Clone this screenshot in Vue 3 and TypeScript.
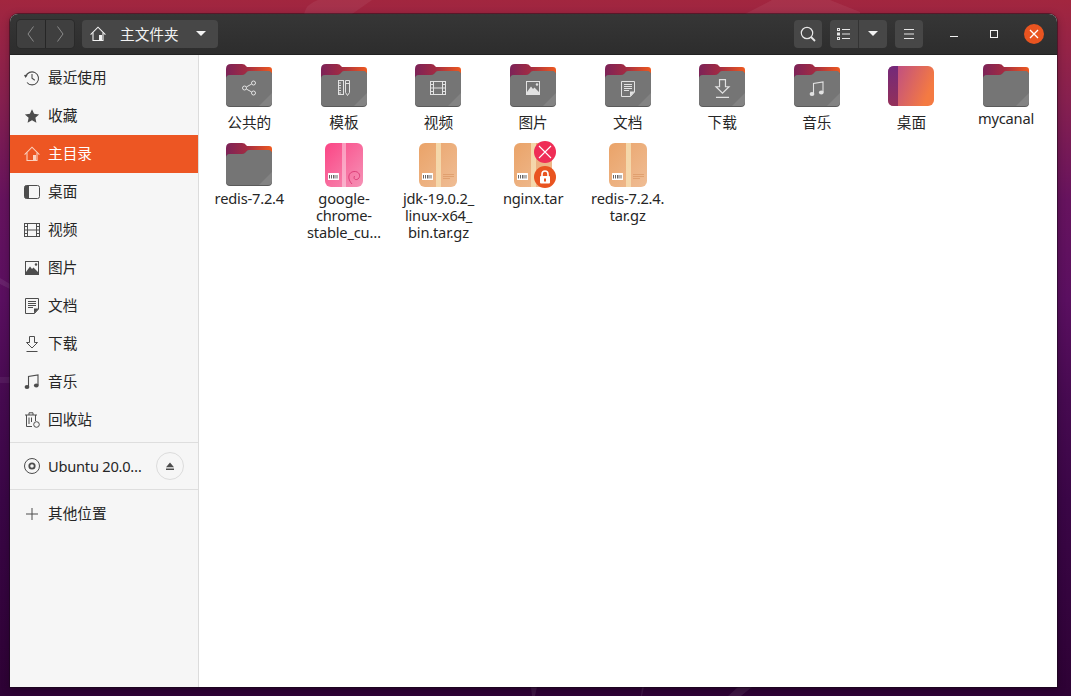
<script setup lang="ts">
interface SideItem { label: string; icon: string; active?: boolean }
interface FileItem { lines: string[]; kind: 'folder' | 'desktop' | 'deb' | 'tar' | 'locked'; glyph?: string; cjk?: boolean; tight?: boolean }

const sideItems: SideItem[] = [
  { label: '最近使用', icon: 'i-history' },
  { label: '收藏', icon: 'i-star' },
  { label: '主目录', icon: 'i-home', active: true },
  { label: '桌面', icon: 'i-desktop' },
  { label: '视频', icon: 'i-film' },
  { label: '图片', icon: 'i-image' },
  { label: '文档', icon: 'i-doc' },
  { label: '下载', icon: 'i-download' },
  { label: '音乐', icon: 'i-music' },
  { label: '回收站', icon: 'i-trash' },
]

const files: FileItem[] = [
  { lines: ['公共的'], kind: 'folder', glyph: 'i-share', cjk: true },
  { lines: ['模板'], kind: 'folder', glyph: 'i-template', cjk: true },
  { lines: ['视频'], kind: 'folder', glyph: 'i-film', cjk: true },
  { lines: ['图片'], kind: 'folder', glyph: 'i-image', cjk: true },
  { lines: ['文档'], kind: 'folder', glyph: 'i-doc', cjk: true },
  { lines: ['下载'], kind: 'folder', glyph: 'i-download', cjk: true },
  { lines: ['音乐'], kind: 'folder', glyph: 'i-music', cjk: true },
  { lines: ['桌面'], kind: 'desktop', cjk: true },
  { lines: ['mycanal'], kind: 'folder', tight: true },
  { lines: ['redis-7.2.4'], kind: 'folder' },
  { lines: ['google-', 'chrome-', 'stable_cu…'], kind: 'deb' },
  { lines: ['jdk-19.0.2_', 'linux-x64_', 'bin.tar.gz'], kind: 'tar' },
  { lines: ['nginx.tar'], kind: 'locked' },
  { lines: ['redis-7.2.4.', 'tar.gz'], kind: 'tar' },
]
</script>

<template>
  <div class="desktop">
    <svg class="wallpaper" width="1071" height="696" viewBox="0 0 1071 696" aria-hidden="true">
      <path d="M304 14Q306 4 318 0H372L352 14Z" fill="#fff" opacity="0.06" />
      <path d="M745 14L772 0H830L860 12V14Z" fill="#fff" opacity="0.06" />
      <path d="M0 278L10 284V289L0 284Z" fill="#fff" opacity="0.08" />
      <path d="M0 377H10V383H0Z" fill="#fff" opacity="0.06" />
      <path d="M531 687H537L535 696H532Z" fill="#fff" opacity="0.08" />
      <path d="M642 687H644L642 696H641Z" fill="#fff" opacity="0.08" />
      <path d="M738 687H752L741 696H728Z" fill="#fff" opacity="0.08" />
    </svg>
    <svg class="defs" aria-hidden="true">
      <defs>
        <linearGradient id="g-back" x1="0" y1="0" x2="1" y2="0">
          <stop offset="0" stop-color="#7c2358" />
          <stop offset="0.45" stop-color="#a32b42" />
          <stop offset="1" stop-color="#ee5a20" />
        </linearGradient>
        <linearGradient id="g-desk" x1="0" y1="0" x2="1" y2="0.35">
          <stop offset="0" stop-color="#b5468f" />
          <stop offset="1" stop-color="#f47a42" />
        </linearGradient>
        <linearGradient id="g-strip" x1="0" y1="0" x2="0" y2="1">
          <stop offset="0" stop-color="#74297a" />
          <stop offset="1" stop-color="#93305a" />
        </linearGradient>
        <linearGradient id="g-pink" x1="0" y1="0" x2="1" y2="1">
          <stop offset="0" stop-color="#fb4585" />
          <stop offset="1" stop-color="#f592b6" />
        </linearGradient>
        <linearGradient id="g-tan" x1="0" y1="0" x2="1" y2="1">
          <stop offset="0" stop-color="#eaa368" />
          <stop offset="1" stop-color="#efbd95" />
        </linearGradient>
      </defs>
      <symbol id="folder" viewBox="0 0 46 44">
        <path d="M0 5Q0 0 5 0H16Q19 0 20 2L21 3H43Q46 3 46 6V24H0Z" fill="url(#g-back)" />
        <path d="M0 15Q0 11 4 11H16Q18 11 19 10L20 9Q21 7.500 23 7.500H42Q46 7.500 46 11.500V39Q46 43 42 43H4Q0 43 0 39Z" fill="#5a5a5a" />
        <path d="M0 15Q0 11 4 11H16Q18 11 19 10L20 9Q21 7 23 7H42Q46 7 46 11V38Q46 42 42 42H4Q0 42 0 38Z" fill="#757575" />
        <path d="M46 29L33 42H42Q46 42 46 38Z" fill="#fff" opacity="0.1" />
      </symbol>
      <symbol id="desk" viewBox="0 0 46 44">
        <rect x="0" y="2" width="46" height="40" rx="6" fill="url(#g-desk)" />
        <path d="M6 2H10V42H6Q0 42 0 36V8Q0 2 6 2Z" fill="url(#g-strip)" />
      </symbol>
      <symbol id="box-pink" viewBox="0 0 38 44">
        <rect width="38" height="44" rx="6" fill="url(#g-pink)" />
        <rect x="17" width="4" height="44" fill="#fff" opacity="0.4" />
        <rect x="3" y="30" width="11" height="7" rx="0.500" fill="#fff" />
        <path d="M4.500 32v3.500M6.500 32v3.500M8.500 32v3.500M10 32v3.500M12 32v3.500" stroke="#666" stroke-width="1" />
        <path d="M27 41C22 36 23 29 29 28.500C34 28 36.500 33 33 36C30.500 37.500 28 36 29.500 33" fill="none" stroke="#d93a75" stroke-width="0.900" />
      </symbol>
      <symbol id="box-tan" viewBox="0 0 38 44">
        <rect width="38" height="44" rx="6" fill="url(#g-tan)" />
        <rect x="17" width="5" height="44" fill="#f5dcaf" opacity="0.9" />
        <rect x="3" y="30" width="11" height="7" rx="0.500" fill="#fff" />
        <path d="M4.500 32v3.500M6.500 32v3.500M8.500 32v3.500M10 32v3.500M12 32v3.500" stroke="#666" stroke-width="1" />
        <path d="M24 31.500h11M24 33.500h11M24 35.500h7" stroke="#dc9a68" stroke-width="0.800" />
      </symbol>

      <symbol id="i-history" viewBox="0 0 16 16">
        <g fill="none" stroke="currentColor" stroke-width="1.100">
          <path d="M1.800 6.500A6.500 6.500 0 1 1 3 12.500" />
          <path d="M8 4v4.200l2.800 2" />
        </g>
        <path d="M0 5L3.800 4.600L1.500 8Z" fill="currentColor" />
      </symbol>
      <symbol id="i-star" viewBox="0 0 16 16">
        <path d="M8 1.200l2.100 4.600 5 .6-3.700 3.400 1 5L8 12.300 3.600 14.800l1-5L.9 6.400l5-.6z" fill="currentColor" />
      </symbol>
      <symbol id="i-home" viewBox="0 0 16 16">
        <g fill="none" stroke="currentColor" stroke-width="1.100">
          <path d="M.6 8.600L8 1.200l7.400 7.400" />
          <path d="M3 6.500V14.500H13V6.500" />
        </g>
        <rect x="9" y="9" width="3" height="5.500" fill="currentColor" />
      </symbol>
      <symbol id="i-desktop" viewBox="0 0 16 16">
        <rect x="0.500" y="1.500" width="15" height="13" rx="2" fill="none" stroke="currentColor" />
        <path d="M2.500 1.500H5V14.500H2.500Q.5 14.500 .5 12.500V3.500Q.5 1.500 2.500 1.500Z" fill="currentColor" />
      </symbol>
      <symbol id="i-film" viewBox="0 0 16 16">
        <g fill="none" stroke="currentColor">
          <rect x="0.500" y="1.500" width="15" height="13" />
          <path d="M3.500 1.500v13M12.500 1.500v13M3.500 8h9M.5 4.500h3M.5 8h3M.5 11.500h3M12.500 4.500h3M12.500 8h3M12.500 11.500h3" />
        </g>
      </symbol>
      <symbol id="i-image" viewBox="0 0 16 16">
        <path fill-rule="evenodd" d="M1 1H15V15H1ZM2 2V12H14V2Z" fill="currentColor" />
        <path d="M2 12L6 6.500L8 9L9.500 7.500L14 12ZM12 3.200a1.300 1.300 0 1 1 0 2.600a1.300 1.300 0 1 1 0-2.600Z" fill="currentColor" />
      </symbol>
      <symbol id="i-doc" viewBox="0 0 16 16">
        <g fill="none" stroke="currentColor">
          <path d="M1.500 .5H14.500V11L10.500 15.500H1.500Z" />
          <path d="M4 3.500H12M4 5.500H12M4 7.500H12M4 9.500H9" />
        </g>
        <path d="M10 15.500V10.500H15Z" fill="currentColor" />
      </symbol>
      <symbol id="i-download" viewBox="0 0 16 16">
        <g fill="none" stroke="currentColor">
          <path d="M5.500 .5H10.500V6.500H13.500L8 12L2.500 6.500H5.500Z" />
          <path d="M2.500 15.500H13.500" />
        </g>
      </symbol>
      <symbol id="i-music" viewBox="0 0 16 16">
        <path d="M4.500 12.500V2.500L14 1V11" fill="none" stroke="currentColor" stroke-width="1.100" />
        <ellipse cx="3" cy="13" rx="2.400" ry="2" fill="currentColor" />
        <ellipse cx="12.300" cy="11.500" rx="2.400" ry="2" fill="currentColor" />
      </symbol>
      <symbol id="i-trash" viewBox="0 0 16 16">
        <g fill="none" stroke="currentColor">
          <path d="M1 3H13M5 3V.8H9V3M2.500 3V14.500H8M11.500 3V9" />
          <path d="M5 5.500V12M7.500 5.500V10" />
          <circle cx="12.500" cy="12.500" r="2.800" />
        </g>
      </symbol>
      <symbol id="i-disc" viewBox="0 0 16 16">
        <g fill="none" stroke="currentColor">
          <circle cx="8" cy="8" r="7.500" />
        </g>
        <circle cx="8" cy="8" r="2.700" fill="none" stroke="currentColor" stroke-width="1.800" />
      </symbol>
      <symbol id="i-plus" viewBox="0 0 16 16">
        <path d="M8 2V14M2 8H14" stroke="currentColor" fill="none" />
      </symbol>
      <symbol id="i-share" viewBox="0 0 16 16">
        <g fill="none" stroke="currentColor">
          <circle cx="3.500" cy="8" r="2" />
          <circle cx="12.500" cy="3" r="2" />
          <circle cx="12.500" cy="13" r="2" />
          <path d="M5.300 7L10.700 4M5.300 9L10.700 12" />
        </g>
      </symbol>
      <symbol id="i-template" viewBox="0 0 16 16">
        <g fill="none" stroke="currentColor">
          <rect x="2.500" y="0.500" width="5" height="14" />
          <path d="M2.500 3h2.500M2.500 5.500h2.500M2.500 8h2.500M2.500 10.500h2.500M2.500 13h2.500" />
          <path d="M9.500 .5H13.500V12.500L11.500 15.500L9.500 12.500ZM9.500 3.500H13.500" />
        </g>
      </symbol>
    </svg>

    <div class="window">
      <header class="headerbar">
        <div class="btn-group nav-group">
          <button class="hb-btn nav-btn">
            <svg width="10" height="18" viewBox="0 0 10 18"><path d="M7.500 1.500L2 9l5.500 7.500" fill="none" stroke="#8c8c8c" /></svg>
          </button>
          <button class="hb-btn nav-btn">
            <svg width="10" height="18" viewBox="0 0 10 18"><path d="M2.500 1.500L8 9l-5.500 7.500" fill="none" stroke="#8c8c8c" /></svg>
          </button>
        </div>
        <button class="hb-btn path-btn">
          <svg class="ico" width="16" height="16"><use href="#i-home" /></svg>
          <span class="path-label">主文件夹</span>
          <span class="caret"></span>
        </button>
        <div class="spacer"></div>
        <button class="hb-btn square">
          <svg width="16" height="16" viewBox="0 0 16 16"><g fill="none" stroke="#e6e6e6" stroke-width="1.200"><circle cx="7" cy="7" r="5.700" /><path d="M11 11l4 4" stroke-width="1.800" /></g></svg>
        </button>
        <div class="btn-group view-group">
          <button class="hb-btn view-btn">
            <svg width="14" height="12" viewBox="0 0 14 12"><g fill="none" stroke="#e6e6e6"><rect x="0.500" y="0.500" width="2" height="2" /><rect x="0.500" y="5" width="2" height="2" /><rect x="0.500" y="9.500" width="2" height="2" /><path d="M5 1.500H13M5 6H13M5 10.500H13" /></g></svg>
          </button>
          <button class="hb-btn caret-btn"><span class="caret"></span></button>
        </div>
        <button class="hb-btn square menu-btn">
          <svg width="12" height="12" viewBox="0 0 12 12"><path d="M1 1.500H11M1 6H11M1 10.500H11" stroke="#e6e6e6" fill="none" /></svg>
        </button>
        <div class="wm">
          <span class="wm-cell"><i class="wm-min"></i></span>
          <span class="wm-cell"><i class="wm-max"></i></span>
          <span class="wm-cell">
            <span class="wm-close">
              <svg width="10" height="10" viewBox="0 0 10 10"><path d="M1 1L9 9M9 1L1 9" stroke="#fff" stroke-width="1.300" /></svg>
            </span>
          </span>
        </div>
      </header>

      <div class="body">
        <aside class="sidebar">
          <div class="side-list">
            <div v-for="item in sideItems" :key="item.label" class="side-row" :class="{ active: item.active }">
              <svg class="side-ico" width="16" height="16"><use :href="'#' + item.icon" /></svg>
              <span class="side-cjk">{{ item.label }}</span>
            </div>
          </div>
          <div class="side-sep"></div>
          <div class="side-row disc-row">
            <svg class="side-ico" width="16" height="16"><use href="#i-disc" /></svg>
            <span class="disc-label">Ubuntu 20.0…</span>
            <span class="eject">
              <svg width="8" height="9" viewBox="0 0 10 10"><path d="M5 0L10 6H0ZM0 7.500H10V9.500H0Z" fill="#4d4d4d" /></svg>
            </span>
          </div>
          <div class="side-sep no-gap"></div>
          <div class="side-row other-row">
            <svg class="side-ico" width="16" height="16"><use href="#i-plus" /></svg>
            <span class="side-cjk">其他位置</span>
          </div>
        </aside>

        <main class="files">
          <div v-for="(f, i) in files" :key="i" class="file">
            <div class="thumb">
              <template v-if="f.kind === 'folder'">
                <svg width="46" height="44"><use href="#folder" /></svg>
                <svg v-if="f.glyph" class="glyph" :class="f.glyph" width="16" height="16"><use :href="'#' + f.glyph" /></svg>
              </template>
              <svg v-else-if="f.kind === 'desktop'" width="46" height="44"><use href="#desk" /></svg>
              <svg v-else-if="f.kind === 'deb'" width="38" height="44"><use href="#box-pink" /></svg>
              <svg v-else width="38" height="44"><use href="#box-tan" /></svg>
              <template v-if="f.kind === 'locked'">
                <span class="emblem emblem-x">
                  <svg width="14" height="14" viewBox="0 0 14 14"><path d="M1 1L13 13M13 1L1 13" stroke="#fff" stroke-width="1.100" /></svg>
                </span>
                <span class="emblem emblem-lock">
                  <svg width="12" height="14" viewBox="0 0 12 14"><path d="M3 6V4a3 3 0 0 1 6 0V6" fill="none" stroke="#fff" stroke-width="1.600" /><rect x="1" y="6" width="10" height="7.500" rx="1" fill="#fff" /><rect x="5" y="8.500" width="2" height="3" fill="#e95420" /></svg>
                </span>
              </template>
            </div>
            <div class="label" :class="{ cjk: f.cjk, tight: f.tight }">
              <span v-for="line in f.lines" :key="line">{{ line }}</span>
            </div>
          </div>
        </main>
      </div>
    </div>
  </div>
</template>

<style>
html, body { margin: 0; padding: 0; background: #2c0030; }
</style>

<style scoped>
.desktop {
  width: 1071px;
  height: 696px;
  box-sizing: border-box;
  padding: 14px 14px 9px 10px;
  overflow: hidden;
  position: relative;
  font-family: "Noto Sans", "Noto Sans CJK SC", sans-serif;
  font-size: 14.67px;
  color: #262626;
  background: linear-gradient(180deg, #a2263f 0, #86204f 100px, #66135e 200px, #5a0f60 300px, #460a50 400px, #3a0646 500px, #2e0235 690px);
}
.wallpaper { position: absolute; left: 0; top: 0; }
.defs { position: absolute; width: 0; height: 0; }
.window {
  position: relative;
  width: 1047px;
  height: 673px;
  border-radius: 8px 8px 0 0;
  display: flex;
  flex-direction: column;
  background: #fff;
  box-shadow: 0 0 0 1px rgba(20, 10, 20, 0.45), 0 2px 8px rgba(0, 0, 0, 0.3);
  overflow: hidden;
}
.headerbar {
  flex: 0 0 41px;
  box-sizing: border-box;
  height: 41px;
  background: linear-gradient(180deg, #363636, #2d2d2d);
  border-bottom: 1px solid #222;
  display: flex;
  align-items: center;
  padding: 0 0 1px 7px;
  color: #f2f2f2;
}
.hb-btn {
  appearance: none;
  border: 0;
  margin: 0;
  padding: 0;
  height: 28px;
  background: #474747;
  color: #f2f2f2;
  font: inherit;
  display: flex;
  align-items: center;
  justify-content: center;
  border-radius: 4px;
}
.btn-group { display: flex; }
.btn-group .hb-btn:first-child { border-radius: 4px 0 0 4px; }
.btn-group .hb-btn:last-child { border-radius: 0 4px 4px 0; }
.nav-group { box-shadow: 0 0 0 1px #2a2a2a; border-radius: 4px; }
.nav-btn { width: 28.500px; background: #3f3f3f; }
.nav-btn:first-child { border-right: 1px solid #262626; }
.path-btn {
  width: 136px;
  margin-left: 8px;
  justify-content: flex-start;
  padding-left: 8px;
  box-sizing: border-box;
}
.ico { color: #f2f2f2; flex: none; }
.path-label { margin-left: 14px; }
.caret {
  display: block;
  width: 0;
  height: 0;
  border-left: 5px solid transparent;
  border-right: 5px solid transparent;
  border-top: 5px solid #f2f2f2;
}
.path-btn .caret { margin-left: 17px; }
.spacer { flex: 1; }
.square { width: 28px; }
.view-group { margin-left: 8px; }
.view-btn { width: 29px; border-right: 1px solid #333; }
.caret-btn { width: 28px; }
.menu-btn { margin-left: 8px; }
.wm { display: flex; margin-left: 11px; padding-right: 3px; }
.wm-cell { width: 40px; height: 28px; display: flex; align-items: center; justify-content: center; }
.wm-min { display: block; width: 8px; height: 1px; background: #f2f2f2; margin-top: 6px; }
.wm-max { display: block; box-sizing: border-box; width: 8px; height: 8px; border: 1px solid #f2f2f2; }
.wm-close {
  width: 20px;
  height: 20px;
  border-radius: 50%;
  background: #e95420;
  display: flex;
  align-items: center;
  justify-content: center;
}
.body { flex: 1; display: flex; min-height: 0; }
.sidebar {
  width: 189px;
  flex: none;
  box-sizing: border-box;
  background: #f6f6f6;
  border-right: 1px solid #dcdcdc;
  padding-top: 4px;
}
.side-row {
  height: 38px;
  display: flex;
  align-items: center;
  padding-left: 14px;
  color: #262626;
}
.side-cjk { padding-bottom: 4px; }
.side-ico { color: #4d4d4d; flex: none; margin-right: 8px; }
.side-row.active { background: #ed5623; color: #fff; }
.side-row.active .side-ico { color: #fbd0bd; }
.side-sep { height: 1px; background: #dedede; margin-top: 3px; }
.side-sep.no-gap { margin-top: 0; }
.disc-row { height: 46px; }
.disc-label { flex: 1; white-space: nowrap; letter-spacing: -0.25px; }
.eject {
  box-sizing: border-box;
  width: 28px;
  height: 28px;
  border-radius: 50%;
  border: 1px solid #dcdcdc;
  display: flex;
  align-items: center;
  justify-content: center;
  margin-right: 14px;
  flex: none;
}
.other-row { margin-top: 5px; }
.files {
  flex: 1;
  box-sizing: border-box;
  background: #fff;
  padding: 9px 0 0 3px;
  display: grid;
  grid-template-columns: repeat(9, 94.6px);
  grid-auto-rows: 79px;
  align-content: start;
}
.file { display: flex; flex-direction: column; align-items: center; }
.thumb {
  position: relative;
  height: 44px;
  display: flex;
  justify-content: center;
  flex: none;
}
.glyph { position: absolute; left: 15px; top: 16px; color: #e2e2e2; }
.glyph.i-download { left: 14px; top: 15px; width: 19px; height: 19px; }
.glyph.i-music, .glyph.i-doc { top: 17px; }
.emblem {
  position: absolute;
  left: 20px;
  width: 22px;
  height: 22px;
  border-radius: 50%;
  display: flex;
  align-items: center;
  justify-content: center;
}
.emblem-x { top: -2px; background: #ef2d56; }
.emblem-lock { top: 23px; background: #e95420; }
.label {
  margin-top: 3px;
  display: flex;
  flex-direction: column;
  align-items: center;
  line-height: 17px;
  white-space: nowrap;
  letter-spacing: -0.2px;
  position: relative;
  z-index: 1;
}
.label.cjk { margin-top: 6px; letter-spacing: 0; }
.label.tight { margin-top: 2px; }
</style>
